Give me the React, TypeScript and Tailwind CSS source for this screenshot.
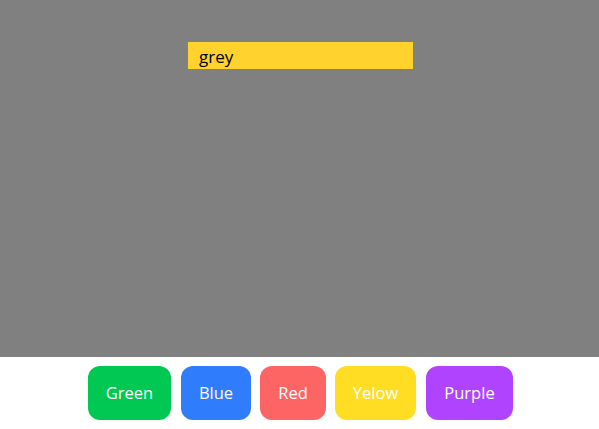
export default function App() {
  const buttons = [
    { label: "Green", cls: "w-[83px] bg-[#00c853]" },
    { label: "Blue", cls: "w-[70px] bg-[#2f7dfc] ml-[10px]" },
    { label: "Red", cls: "w-[66px] bg-[#fd6565] ml-[9px]" },
    { label: "Yelow", cls: "w-[81px] bg-[#ffdd22] ml-[9px]" },
    { label: "Purple", cls: "w-[87px] bg-[#b044fe] ml-[10px]" },
  ];
  return (
    <div className="w-[599px] h-[429px] flex flex-col" style={{ fontFamily: '"Open Sans", "Noto Sans", sans-serif' }}>
      <div className="h-[357px] bg-[#808080] pt-[42px] pl-[188px]">
        <div className="w-[225px] h-[27px] bg-[#ffd22e] pl-[11px] text-[17px] leading-[29px] text-black">grey</div>
      </div>
      <div className="flex-1 bg-white flex items-center pl-[88px]">
        {buttons.map((b) => (
          <div
            key={b.label}
            className={`${b.cls} h-[54px] rounded-[12px] flex items-center justify-center text-white text-[16.5px] pt-[1px]`}
          >
            {b.label}
          </div>
        ))}
      </div>
    </div>
  );
}
